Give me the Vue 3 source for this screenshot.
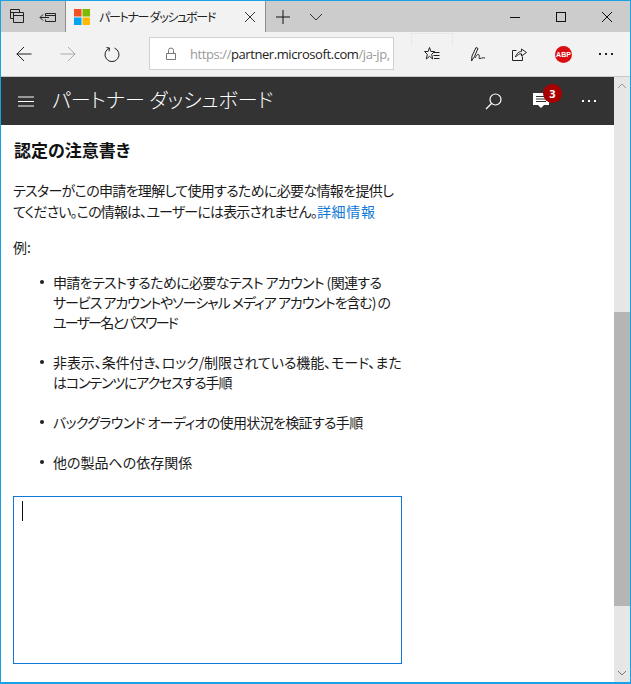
<script setup>
// ls = letter spacing per line, the kana in the original font are narrower than Noto's
const items = [
  [
    { text: '申請をテストするために必要なテスト アカウント (関連する', ls: -0.64 },
    { text: 'サービス アカウントやソーシャル メディア アカウントを含む) の', ls: -1.03 },
    { text: 'ユーザー名とパスワード', ls: -1.8 }
  ],
  [
    { text: '非表示、条件付き、ロック/制限されている機能、モード、また', ls: -0.07 },
    { text: 'はコンテンツにアクセスする手順', ls: -1.13 }
  ],
  [{ text: 'バックグラウンド オーディオの使用状況を検証する手順', ls: -0.65 }],
  [{ text: '他の製品への依存関係', ls: 0 }]
]
</script>

<template>
  <div class="window">
    <div class="titlebar">
      <div class="tab-tools">
        <svg class="ico" width="20" height="20" viewBox="0 0 20 20" fill="none" stroke="#222"><path d="M6.5 11.5h-3v-9h9v3M3.5 5.5h9M6.5 5.5h10v10h-10zM6.5 8.5h10"/></svg>
        <svg class="ico" width="20" height="20" viewBox="0 0 20 20" fill="none" stroke="#222"><path d="M7.5 6.5h10v8h-10v-2M7.5 9.5v-3M2 10.5h9M5 7.5l-3 3 3 3M7.5 8.5h10"/></svg>
      </div>
      <div class="tab">
        <svg width="16" height="16" viewBox="0 0 16 16"><rect width="7.5" height="7.5" fill="#f25022"/><rect x="8.5" width="7.5" height="7.5" fill="#7fba00"/><rect y="8.5" width="7.5" height="7.5" fill="#00a4ef"/><rect x="8.5" y="8.5" width="7.5" height="7.5" fill="#ffb900"/></svg>
        <span class="tab-title">パートナー ダッシュボード</span>
        <svg class="tab-close" width="12" height="12" viewBox="0 0 12 12" stroke="#333" fill="none"><path d="M1 1l10 10M11 1L1 11"/></svg>
      </div>
      <div class="new-tab">
        <svg width="14" height="14" viewBox="0 0 14 14" stroke="#111" fill="none"><path d="M7 0v14M0 7h14"/></svg>
        <svg width="14" height="8" viewBox="0 0 14 8" stroke="#333" fill="none"><path d="M1 1l6 6 6-6"/></svg>
      </div>
      <div class="win-buttons">
        <svg width="12" height="12" viewBox="0 0 12 12" stroke="#111" fill="none"><path d="M1 6.5h10"/></svg>
        <svg width="12" height="12" viewBox="0 0 12 12" stroke="#111" fill="none"><rect x="1.5" y="1.5" width="9" height="9"/></svg>
        <svg width="12" height="12" viewBox="0 0 12 12" stroke="#111" fill="none"><path d="M1 1l10 10M11 1L1 11"/></svg>
      </div>
    </div>

    <div class="toolbar">
      <div class="nav">
        <svg width="16" height="16" viewBox="0 0 16 16" stroke="#222" fill="none"><path d="M0.5 8h15M8 1L1 8l7 7"/></svg>
        <svg width="16" height="16" viewBox="0 0 16 16" stroke="#aaa" fill="none"><path d="M0.5 8h15M8 1l7 7-7 7"/></svg>
        <svg width="16" height="16" viewBox="0 0 16 16" stroke="#222" fill="none"><path d="M5.5 2.1a7 7 0 1 0 5 0M2.5 1.5l3 .6-.5 3.2"/></svg>
      </div>
      <div class="address">
        <svg class="lock" width="12" height="14" viewBox="0 0 12 14" stroke="#777" fill="none"><path d="M1.5 6.5h9v6h-9zM3.5 6.5v-3a2.5 2.5 0 0 1 5 0v3"/></svg>
        <span class="url"><span class="dim">https://</span>partner.microsoft.com<span class="dim">/ja-jp,</span></span>
      </div>
      <div class="actions">
        <div class="hub">
          <svg width="16" height="16" viewBox="0 0 16 16" stroke="#222" fill="none"><path d="M5.5 1.5l1.4 4h3.6L7.7 8.300l1 4.700-3.200-2.700L2.300 13l1-4.700L.5 5.500h3.600zM9 6.500h6.500M9.500 9.500h6M10 12.500h5.500"/></svg>
        </div>
        <svg class="pen" width="16" height="16" viewBox="0 0 16 16" stroke="#222" fill="none"><path d="M1.500 15l.5-5 4-8.500 2 1-3.500 8zM5 12c1-2 3-5 4-3s-1 4 1 3.500 3-1 5-.5"/></svg>
        <svg width="16" height="16" viewBox="0 0 16 16" stroke="#222" fill="none"><path d="M5.500 4.500h-4v10h10v-4M4.500 11c1-4 4-5.500 6-5.500V3l5 3.500-5 3.500V7.800c-2.500 0-4 1-6 3.200z"/></svg>
        <span class="abp">ABP</span>
        <span class="dots">
          <i></i><i></i><i></i>
        </span>
      </div>
    </div>

    <div class="page">
      <div class="content">
        <header class="app-header">
          <svg class="burger" width="16" height="11" viewBox="0 0 16 11" stroke="#fff" fill="none"><path d="M0 1h16M0 5.500h16M0 10h16"/></svg>
          <h1>パートナー ダッシュボード</h1>
          <svg class="search" width="17" height="17" viewBox="0 0 17 17" stroke="#fff" stroke-width="1.200" fill="none"><circle cx="10.500" cy="6.500" r="5.500"/><path d="M6.500 10.500L1 16"/></svg>
          <div class="notify">
            <svg width="16" height="16" viewBox="0 0 16 16"><path d="M0 0h16v12h-5l-3 3-3-3H0z" fill="#fff"/><path d="M3 3.500h8M3 6h10M3 8.500h10" stroke="#333"/></svg>
            <span class="badge">3</span>
          </div>
          <span class="dots light"><i></i><i></i><i></i></span>
        </header>

        <main class="body">
          <h2>認定の注意書き</h2>
          <p class="intro">
            <span class="line1">テスターがこの申請を理解して使用するために必要な情報を提供し</span>
            <span class="line2">てください。この情報は、ユーザーには表示されません。<a href="#">詳細情報</a></span>
          </p>
          <p class="example">例:</p>
          <ul>
            <li v-for="(item, i) in items" :key="i">
              <span v-for="line in item" :key="line.text" class="li-line" :style="{ letterSpacing: line.ls + 'px' }">{{ line.text }}</span>
            </li>
          </ul>
          <div class="note">
            <textarea aria-label="認定の注意書き"></textarea>
            <span class="caret"></span>
          </div>
        </main>
      </div>

      <div class="scrollbar">
        <svg class="arrow" width="10" height="6" viewBox="0 0 10 6" stroke="#999" fill="none"><path d="M1 5l4-4 4 4"/></svg>
        <div class="track"><div class="thumb"></div></div>
        <svg class="arrow" width="10" height="6" viewBox="0 0 10 6" stroke="#777" fill="none"><path d="M1 1l4 4 4-4"/></svg>
      </div>
    </div>
  </div>
</template>

<style>
html, body {
  margin: 0;
  overflow: hidden;
}
</style>

<style scoped>
.window {
  width: 631px;
  height: 684px;
  box-sizing: border-box;
  border: 1px solid #19a0e6;
  border-bottom-width: 2px;
  display: flex;
  flex-direction: column;
  font-family: "Noto Sans CJK JP", "Liberation Sans", sans-serif;
  background: #fff;
  overflow: hidden;
}
svg {
  flex: none;
}
.titlebar {
  height: 31px;
  flex: none;
  display: flex;
  background: #cccccc;
}
.tab-tools {
  width: 65px;
  display: flex;
  align-items: center;
  justify-content: space-between;
  padding: 0 7px 0 6px;
  box-sizing: border-box;
  border-right: 1px solid #8d8d8d;
}
.tab {
  width: 200px;
  box-sizing: border-box;
  background: #f2f2f2;
  border-right: 1px solid #8d8d8d;
  display: flex;
  align-items: center;
  padding: 0 8px;
}
.tab-title {
  font-size: 12px;
  color: #222;
  margin-left: 9px;
  letter-spacing: -1.3px;
  font-feature-settings: "palt";
  white-space: nowrap;
}
.tab-close {
  margin-left: auto;
  margin-right: 1px;
}
.new-tab {
  display: flex;
  align-items: center;
  gap: 19px;
  padding-left: 10px;
}
.win-buttons {
  margin-left: auto;
  display: flex;
  align-items: center;
  gap: 34px;
  padding-right: 17px;
}
.toolbar {
  height: 44px;
  flex: none;
  background: #f2f2f2;
  border-bottom: 1px solid #c8c8c8;
  display: flex;
  align-items: center;
}
.nav {
  width: 148px;
  display: flex;
  align-items: center;
  padding-left: 15px;
  gap: 28px;
  box-sizing: border-box;
  flex: none;
}
.address {
  width: 245px;
  height: 33px;
  flex: none;
  margin-bottom: 1px;
  box-sizing: border-box;
  background: #fff;
  border: 1px solid #d0d0d0;
  display: flex;
  align-items: center;
  padding-left: 15px;
  gap: 13px;
  overflow: hidden;
}
.url {
  font-family: "Open Sans", "Liberation Sans", sans-serif;
  font-size: 13px;
  color: #222;
  white-space: nowrap;
  letter-spacing: -0.42px;
}
.dim {
  color: #9a9a9a;
}
.actions {
  flex: 1;
  align-self: stretch;
  display: flex;
  align-items: center;
  padding-left: 17px;
  gap: 27px;
}
.hub {
  position: relative;
  width: 42px;
  height: 100%;
  margin-right: -10px;
  display: flex;
  align-items: center;
  justify-content: center;
}
.hub::before {
  content: "";
  position: absolute;
  left: 0;
  right: 0;
  top: 1px;
  height: 13px;
  box-sizing: border-box;
  border: 1px solid #e8e8e8;
  border-bottom: none;
}
.pen {
  margin-right: -2px;
}
.abp {
  width: 17px;
  height: 17px;
  margin-left: 1px;
  border-radius: 50%;
  background: #d90d12;
  color: #fff;
  font: bold 7px/17px "Liberation Sans", sans-serif;
  text-align: center;
  flex: none;
}
.dots {
  display: inline-flex;
  gap: 4px;
}
.dots i {
  width: 2px;
  height: 2px;
  background: #222;
}
.dots.light i {
  background: #fff;
}
.page {
  flex: 1;
  min-height: 0;
  display: flex;
}
.content {
  flex: 1;
  min-width: 0;
  display: flex;
  flex-direction: column;
}
.app-header {
  height: 48px;
  flex: none;
  background: #333333;
  display: flex;
  align-items: center;
  padding-left: 17px;
  color: #fff;
}
.app-header h1 {
  margin: -2px 0 0 18px;
  font-size: 20px;
  font-weight: 300;
  line-height: 48px;
  font-feature-settings: "palt";
  white-space: nowrap;
}
.search {
  margin-left: auto;
}
.notify {
  position: relative;
  display: flex;
  margin-left: 31px;
}
.badge {
  position: absolute;
  left: 10px;
  top: -9px;
  width: 19px;
  height: 19px;
  border-radius: 50%;
  background: #a80000;
  color: #fff;
  font: bold 11px/19px "Open Sans", sans-serif;
  text-align: center;
}
.app-header .dots {
  margin: 0 18px 0 33px;
}
.body {
  padding: 0 0 0 12px;
  color: #1a1a1a;
  font-size: 14px;
  line-height: 20px;
  font-feature-settings: "palt";
}
h2 {
  margin: 13px 0 0 1px;
  font-size: 17px;
  font-weight: 700;
  line-height: 24px;
  color: #111;
}
.intro {
  margin: 18px 0 0;
  line-height: 21px;
  white-space: nowrap;
}
.line1,
.line2 {
  display: block;
}
.line1 {
  letter-spacing: -0.67px;
}
.line2 {
  letter-spacing: -0.85px;
}
.intro a {
  color: #0f7ad8;
  text-decoration: none;
  letter-spacing: 0.7px;
}
.example {
  margin: 15px 0 0;
}
ul {
  margin: 15px 0 0;
  padding: 0 0 0 40px;
  list-style: none;
  white-space: nowrap;
}
li {
  position: relative;
  margin-bottom: 20px;
}
li::before {
  content: "";
  position: absolute;
  left: -13px;
  top: 8px;
  width: 4px;
  height: 4px;
  border-radius: 50%;
  background: #222;
}
.li-line {
  display: block;
}
.note {
  position: relative;
  width: 389px;
  height: 168px;
  margin-top: 24px;
}
textarea {
  display: block;
  width: 100%;
  height: 100%;
  box-sizing: border-box;
  border: 1px solid #0f78d4;
  outline: none;
  resize: none;
  margin: 0;
  padding: 0;
  background: #fff;
}
.caret {
  position: absolute;
  left: 9px;
  top: 5px;
  width: 1px;
  height: 20px;
  background: #111;
}
.scrollbar {
  width: 16px;
  flex: none;
  background: #e6e6e6;
  display: flex;
  flex-direction: column;
  align-items: center;
}
.arrow {
  flex: none;
  margin: 6px 0;
}
.track {
  flex: 1;
  width: 100%;
  padding-top: 217px;
  box-sizing: border-box;
}
.thumb {
  height: 294px;
  background: #b5b5b5;
}
</style>
